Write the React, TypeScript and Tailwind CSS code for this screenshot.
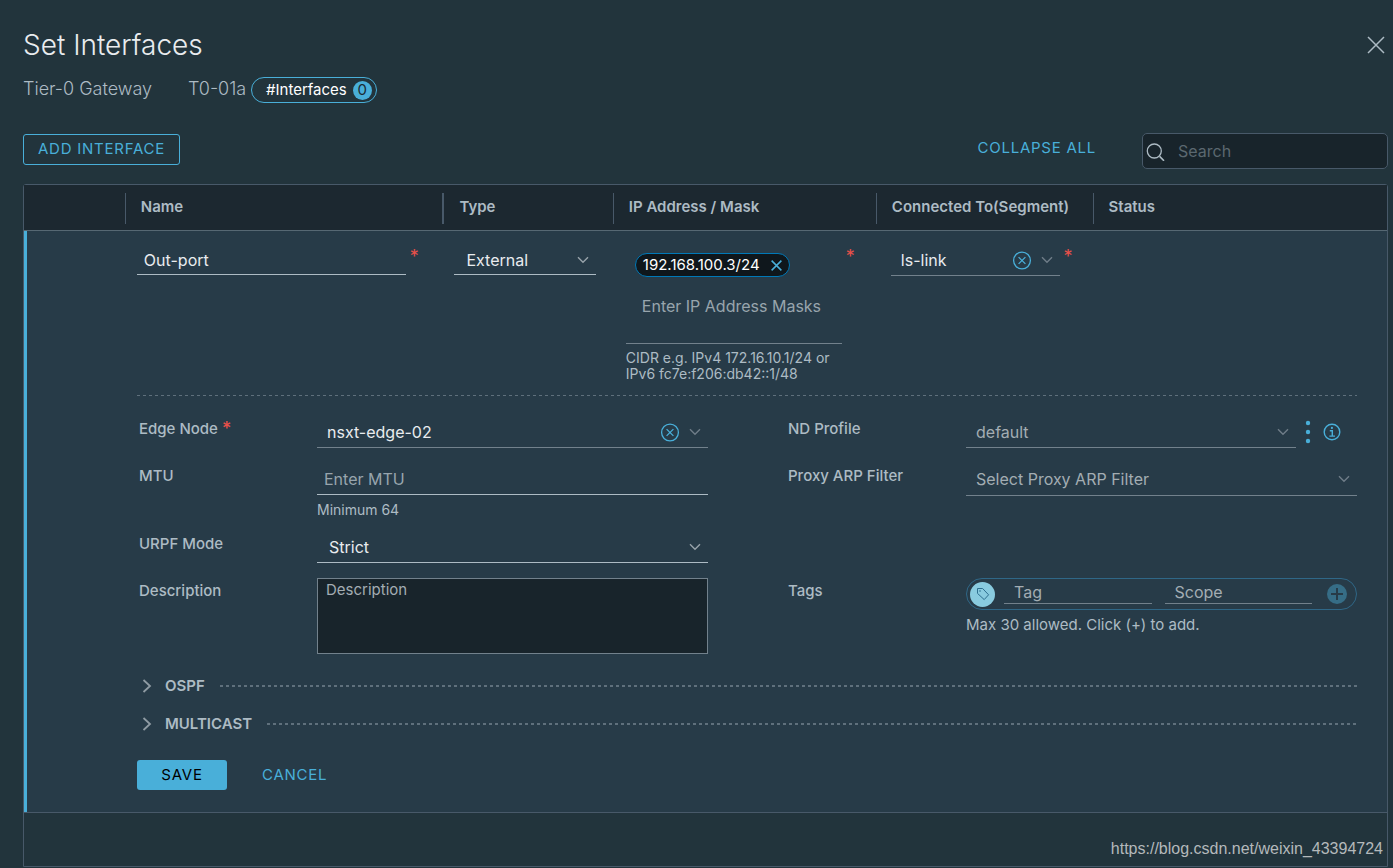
import { useState } from "react";
import type { ReactNode } from "react";

/* ---------------- ICONS ---------------- */

function Chevron({ className = "" }: { className?: string }) {
  return (
    <svg viewBox="0 0 12 8" className={`h-2 w-3 ${className}`} fill="none" stroke="currentColor" strokeWidth="1.4">
      <path d="M1 1.2 6 6.2 11 1.2" />
    </svg>
  );
}

function Cross({ className = "" }: { className?: string }) {
  return (
    <svg viewBox="0 0 18 18" className={className} fill="none" stroke="currentColor" strokeWidth="1.5">
      <path d="M1 1 17 17M17 1 1 17" vectorEffect="non-scaling-stroke" />
    </svg>
  );
}

function ClearIcon() {
  return (
    <svg viewBox="0 0 20 20" className="h-5 w-5" fill="none" stroke="currentColor" strokeWidth="1.3">
      <circle cx="10" cy="10.5" r="8.4" />
      <path d="M6.6 7.1 13.4 13.9M13.4 7.1 6.6 13.9" />
    </svg>
  );
}

function SearchIcon() {
  return (
    <svg viewBox="0 0 20 20" className="h-5 w-5" fill="none" stroke="currentColor" strokeWidth="1.3">
      <circle cx="8.3" cy="10" r="7" />
      <path d="M13.6 15.4 18 19.8" strokeWidth="1.6" />
    </svg>
  );
}

function InfoIcon() {
  return (
    <svg viewBox="0 0 18 18" className="h-[18px] w-[18px]" fill="none" stroke="currentColor" strokeWidth="1.4">
      <circle cx="9" cy="9" r="7.8" />
      <circle cx="8.9" cy="4.9" r="1.1" fill="currentColor" stroke="none" />
      <path d="M6.8 7.8H9.3V13M6.4 13.1H12" />
    </svg>
  );
}

function DotsIcon() {
  return (
    <svg viewBox="0 0 6 24" className="h-6 w-[6px]" fill="currentColor">
      <circle cx="3" cy="3" r="2.2" />
      <circle cx="3" cy="12" r="2.2" />
      <circle cx="3" cy="21" r="2.2" />
    </svg>
  );
}

function TagIcon() {
  return (
    <svg viewBox="0 0 14 14" className="h-[14px] w-[14px]" fill="none" stroke="currentColor" strokeWidth="1">
      <path d="M1.5 1.5H6.6L12.6 7.8 8.2 12.6 1.5 6.4Z" strokeLinejoin="round" />
      <circle cx="4" cy="4" r="0.8" fill="currentColor" stroke="none" />
    </svg>
  );
}

/* ---------------- FORM PARTS ---------------- */

function Star() {
  return <span className="text-lg leading-6 text-[#e8504a]">*</span>;
}

function Label({ htmlFor, required, children }: { htmlFor: string; required?: boolean; children: ReactNode }) {
  return (
    <label htmlFor={htmlFor} className="flex h-6 items-center gap-1 pl-0.5 pt-0.5 text-[15px] font-medium leading-5 text-[#adbbc4]">
      {children}
      {required && <Star />}
    </label>
  );
}

function Select({ id, label, options, className = "" }: { id: string; label?: string; options: string[]; className?: string }) {
  return (
    <div className={`relative ${className}`}>
      <select
        id={id}
        aria-label={label}
        className="h-full w-full appearance-none border-b border-[#adbbc4] bg-transparent pl-3 pr-6 text-base text-[#e9ecef] outline-none"
      >
        {options.map((o) => (
          <option key={o}>{o}</option>
        ))}
      </select>
      <Chevron className="pointer-events-none absolute right-[7px] top-1/2 -translate-y-1/2 text-[#98a3aa]" />
    </div>
  );
}

function Combo({
  id,
  label,
  value,
  placeholder,
  clearable,
  className = "",
}: {
  id: string;
  label?: string;
  value?: string;
  placeholder?: string;
  clearable?: boolean;
  className?: string;
}) {
  const [text, setText] = useState(value ?? "");

  return (
    <div className={`flex items-center border-b border-[#72818c] pr-[7px] ${className}`}>
      <input
        id={id}
        aria-label={label}
        value={text}
        placeholder={placeholder}
        onChange={(e) => setText(e.target.value)}
        className="min-w-0 flex-1 bg-transparent pl-[10px] text-base text-[#e9ecef] outline-none placeholder:text-[#a3adb3]"
      />
      {clearable && (
        <button aria-label="Clear" onClick={() => setText("")} className="mr-[9px] text-[#49afd9]">
          <ClearIcon />
        </button>
      )}
      <button aria-label="Open list" className="text-[#6f7d88]">
        <Chevron />
      </button>
    </div>
  );
}

function Section({ title }: { title: string }) {
  return (
    <button className="flex h-[38px] w-full items-center text-left">
      <svg viewBox="0 0 10 14" className="ml-[5px] h-[14px] w-[10px] text-[#8f9ba3]" fill="none" stroke="currentColor" strokeWidth="1.8">
        <path d="M1.5 1 8 7 1.5 13" />
      </svg>
      <span className="ml-[13px] text-[15px] font-semibold text-[#adbbc4]">{title}</span>
      <span className="ml-[15px] h-0.5 flex-1 bg-[repeating-linear-gradient(90deg,#5f707c_0_3px,transparent_3px_6px)]" />
    </button>
  );
}

/* ---------------- COLUMNS ---------------- */

const columns = [
  { name: "", width: "w-[7.4%]", line: "" },
  { name: "Name", width: "w-[23.3%]", line: "border-l" },
  { name: "Type", width: "w-[12.5%]", line: "border-l-2" },
  { name: "IP Address / Mask", width: "w-[19.3%]", line: "border-l" },
  { name: "Connected To(Segment)", width: "w-[15.9%]", line: "border-l" },
  { name: "Status", width: "", line: "border-l" },
];

export default function App() {
  const [search, setSearch] = useState("");

  return (
    <div className="min-h-screen bg-[#22343c] pl-[23px] pr-[5px] font-[Inter,'Open_Sans',sans-serif] text-[#adbbc4]">

      {/* ================= HEADER ================= */}

      <header className="pt-[27px]">
        <div className="flex items-center justify-between">
          <h1 className="text-[28px] font-light leading-9 text-[#e9ecef]">Set Interfaces</h1>
          <button aria-label="Close" className="mr-[3px] text-[#adbbc4]">
            <Cross className="h-[18px] w-[18px]" />
          </button>
        </div>

        <div className="mt-3 flex h-[30px] items-center text-lg font-light">
          <span className="min-w-[165px] pb-0.5">Tier-0 Gateway</span>
          <span className="min-w-[63px] pb-0.5">T0-01a</span>
          <span className="flex h-[26px] items-center gap-[6px] rounded-full border border-[#49afd9] pl-[14px] pr-1 text-[15px] font-normal text-white">
            #Interfaces
            <span className="flex h-[19px] w-[19px] items-center justify-center rounded-full bg-[#49afd9] text-[#1b2a32]">0</span>
          </span>
        </div>
      </header>

      {/* ================= TOOLBAR ================= */}

      <div className="mt-7 flex h-9 items-start">
        <button className="mt-px h-[31px] rounded-[3px] border border-[#49afd9] px-[14px] text-[15px] tracking-wider text-[#49afd9]">
          ADD INTERFACE
        </button>
        <button className="ml-auto mr-[46px] h-[30px] text-[15px] tracking-wider text-[#49afd9]">COLLAPSE ALL</button>
        <label className="flex h-9 w-[246px] items-center rounded-[5px] border border-[#485969] bg-[#18242b] pl-[3px]">
          <SearchIcon />
          <input
            aria-label="Search"
            value={search}
            onChange={(e) => setSearch(e.target.value)}
            placeholder="Search"
            className="min-w-0 flex-1 bg-transparent pl-3 text-base outline-none placeholder:text-[#5b6870]"
          />
        </label>
      </div>

      {/* ================= TABLE ================= */}

      <div className="mt-[15px] rounded-t-[3px] border border-[#485969]">
        <table className="w-full table-fixed border-separate border-spacing-0">
          <thead className="bg-[#1c2830]">
            <tr>
              {columns.map((c) => (
                <th key={c.name} scope="col" className={`border-b border-[#566873] p-0 pb-1.5 pt-2 text-left text-[15px] font-semibold ${c.width}`}>
                  <div className={`flex h-[31px] items-center whitespace-nowrap border-[#485969] pb-0.5 pl-[15px] ${c.line}`}>{c.name}</div>
                </th>
              ))}
            </tr>
          </thead>

          <tbody className="bg-[#273b48]">
            <tr className="align-top">
              <td className="border-l-[3px] border-[#49afd9] p-0" />

              <td className="p-0 pl-3 pt-[14px]">
                <div className="flex gap-1">
                  <input
                    aria-label="Name"
                    defaultValue="Out-port"
                    className="h-[30px] w-[88%] border-b border-[#adbbc4] bg-transparent pl-[7px] text-base text-[#e9ecef] outline-none"
                  />
                  <Star />
                </div>
              </td>

              <td className="p-0 pl-3 pr-[17px] pt-[14px]">
                <Select id="type" label="Type" options={["External", "Service", "Loopback"]} className="h-[30px]" />
              </td>

              <td className="p-0 pb-[13px] pl-[13px] pr-[21px] pt-[14px]">
                <div className="flex gap-1">
                  <div className="min-w-0 flex-1 pt-2">
                    <div className="border-b border-[#72818c]">
                      <span className="ml-[9px] flex h-6 w-fit items-center gap-[11px] rounded-full border border-[#0079b8] bg-[#0f171c] pl-[7px] pr-[7px] text-[15px] text-white">
                        192.168.100.3/24
                        <button aria-label="Remove 192.168.100.3/24" className="text-[#49afd9]">
                          <Cross className="h-[11px] w-[11px]" />
                        </button>
                      </span>
                      <input
                        aria-label="IP Address / Mask"
                        placeholder="Enter IP Address Masks"
                        className="mb-[21px] mt-[13px] h-8 w-full bg-transparent pl-4 text-base outline-none placeholder:text-[#98a5ad]"
                      />
                    </div>
                    <p className="mt-1.5 whitespace-nowrap text-sm leading-4">
                      CIDR e.g. IPv4 172.16.10.1/24 or
                      <br />
                      IPv6 fc7e:f206:db42::1/48
                    </p>
                  </div>
                  <Star />
                </div>
              </td>

              <td className="p-0 pl-[15px] pr-5 pt-[14px]">
                <div className="flex gap-1">
                  <Combo id="segment" label="Connected To" value="ls-link" clearable className="h-[31px] min-w-0 flex-1" />
                  <Star />
                </div>
              </td>

              <td className="p-0" />
            </tr>

            <tr>
              <td colSpan={6} className="border-l-[3px] border-[#49afd9] p-0 pb-[22px] pl-[110px] pr-[30px]">
                <div className="h-px bg-[repeating-linear-gradient(90deg,#5f707c_0_3px,transparent_3px_6px)]" />

                <div className="grid grid-cols-[180px_minmax(0,1fr)_258px_minmax(0,1fr)] items-start gap-y-[11px] pt-5">

                  <Label htmlFor="edge" required>Edge Node</Label>
                  <Combo id="edge" value="nsxt-edge-02" clearable className="mb-1 h-8" />
                  <div className="pl-[78px]">
                    <Label htmlFor="nd">ND Profile</Label>
                  </div>
                  <div className="mb-1 flex items-center">
                    <Combo id="nd" placeholder="default" className="h-8 min-w-0 flex-1" />
                    <button aria-label="More options" className="ml-[9px] text-[#49afd9]">
                      <DotsIcon />
                    </button>
                    <button aria-label="ND Profile help" className="ml-3 mr-4 text-[#49afd9]">
                      <InfoIcon />
                    </button>
                  </div>

                  <Label htmlFor="mtu">MTU</Label>
                  <div>
                    <input
                      id="mtu"
                      placeholder="Enter MTU"
                      className="block h-8 w-full border-b border-[#adbbc4] bg-transparent pl-[7px] text-base outline-none placeholder:text-[#98a5ad]"
                    />
                    <p className="mt-[5px] text-sm leading-5">Minimum 64</p>
                  </div>
                  <div className="pl-[78px]">
                    <Label htmlFor="arp">Proxy ARP Filter</Label>
                  </div>
                  <Combo id="arp" placeholder="Select Proxy ARP Filter" className="h-[33px]" />

                  <Label htmlFor="urpf">URPF Mode</Label>
                  <Select id="urpf" options={["Strict", "None"]} className="mb-1 h-8" />

                  <div className="col-start-1">
                    <Label htmlFor="desc">Description</Label>
                  </div>
                  <textarea
                    id="desc"
                    placeholder="Description"
                    className="block h-[76px] w-full resize-none border border-[#72818c] bg-[#18242b] px-2 text-[15px] outline-none placeholder:text-[#a3adb3]"
                  />
                  <div className="pl-[78px]">
                    <Label htmlFor="tag">Tags</Label>
                  </div>
                  <div>
                    <div className="flex h-8 items-center rounded-full border border-[#2f6787] pl-[3px] pr-[9px]">
                      <span className="flex h-[25px] w-[25px] shrink-0 items-center justify-center rounded-full bg-[#89cbdf] text-[#2d6f8f]">
                        <TagIcon />
                      </span>
                      <input
                        id="tag"
                        placeholder="Tag"
                        className="mb-1 ml-[9px] h-6 min-w-0 flex-1 border-b border-[#72818c] bg-transparent pl-[10px] text-base outline-none placeholder:text-[#a3adb3]"
                      />
                      <input
                        aria-label="Scope"
                        placeholder="Scope"
                        className="mb-1 ml-[13px] mr-[15px] h-6 min-w-0 flex-1 border-b border-[#72818c] bg-transparent pl-[10px] text-base outline-none placeholder:text-[#a3adb3]"
                      />
                      <button aria-label="Add tag" className="flex h-5 w-5 shrink-0 items-center justify-center rounded-full bg-[#366d86] text-[#273b48]">
                        <svg viewBox="0 0 12 12" className="h-3 w-3" stroke="currentColor" strokeWidth="2">
                          <path d="M6 0V12M0 6H12" />
                        </svg>
                      </button>
                    </div>
                    <p className="mt-[5px] text-[15px] leading-5">Max 30 allowed. Click (+) to add.</p>
                  </div>
                </div>

                <div className="mt-[13px]">
                  <Section title="OSPF" />
                  <Section title="MULTICAST" />
                </div>

                <div className="mt-[17px] flex items-center">
                  <button className="h-[30px] w-[90px] rounded-[3px] bg-[#49afd9] text-[15px] tracking-wider text-black">SAVE</button>
                  <button className="ml-[35px] text-[15px] tracking-wider text-[#49afd9]">CANCEL</button>
                </div>
              </td>
            </tr>
          </tbody>
        </table>

        <footer className="flex h-[54px] items-end justify-end border-t border-[#485969] pb-[5px] pr-1">
          <span className="font-['Liberation_Sans',Arial,sans-serif] text-base text-[#b4b9bb]">
            https://blog.csdn.net/weixin_43394724
          </span>
        </footer>
      </div>
    </div>
  );
}
